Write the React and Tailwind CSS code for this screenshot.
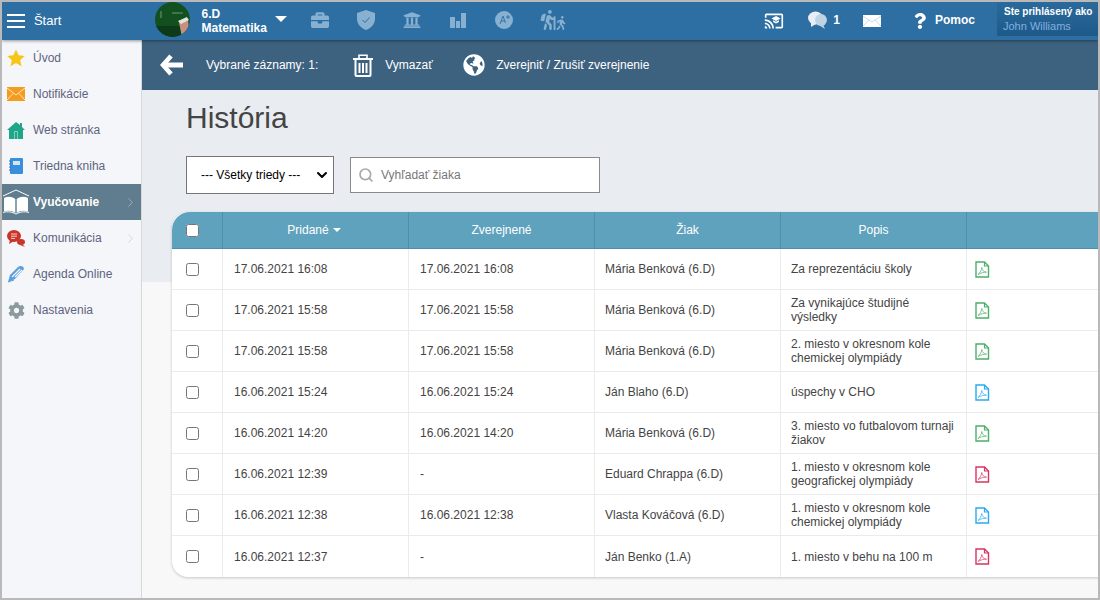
import React from "react";
import { FaGlobeAmericas, FaBriefcase, FaUniversity, FaWalking, FaHiking, FaQuestion, FaCog } from "react-icons/fa";
import { MdCastForEducation } from "react-icons/md";
import { ChevronRight, ChevronDown, Search } from "lucide-react";

const rows = [
  ["17.06.2021 16:08", "17.06.2021 16:08", "Mária Benková (6.D)", ["Za reprezentáciu školy"], "#4caf6a"],
  ["17.06.2021 15:58", "17.06.2021 15:58", "Mária Benková (6.D)", ["Za vynikajúce študijné", "výsledky"], "#4caf6a"],
  ["17.06.2021 15:58", "17.06.2021 15:58", "Mária Benková (6.D)", ["2. miesto v okresnom kole", "chemickej olympiády"], "#4caf6a"],
  ["16.06.2021 15:24", "16.06.2021 15:24", "Ján Blaho (6.D)", ["úspechy v CHO"], "#29aaf0"],
  ["16.06.2021 14:20", "16.06.2021 14:20", "Mária Benková (6.D)", ["3. miesto vo futbalovom turnaji", "žiakov"], "#4caf6a"],
  ["16.06.2021 12:39", "-", "Eduard Chrappa (6.D)", ["1. miesto v okresnom kole", "geografickej olympiády"], "#d9345f"],
  ["16.06.2021 12:38", "16.06.2021 12:38", "Vlasta Kováčová (6.D)", ["1. miesto v okresnom kole", "chemickej olympiády"], "#29aaf0"],
  ["16.06.2021 12:37", "-", "Ján Benko (1.A)", ["1. miesto v behu na 100 m"], "#d9345f"],
];

function Pdf({ color }) {
  return (
    <svg width="15" height="17" viewBox="0 0 15 17" fill="none">
      <path d="M1 1H9.5L13.5 5V16H1Z" fill="#fff" stroke={color} strokeWidth="1.4" />
      <path d="M9.5 1V5H13.5" stroke={color} strokeWidth="1.2" />
      <path d="M3 13.5C5 12 6.5 9 6.8 6.5C7.2 9 8.5 11 11.5 11.2C9 11 6 11.8 3 13.5Z" stroke={color} strokeOpacity="0.7" strokeWidth="1" />
    </svg>
  );
}

const StarIcon = () => (
  <svg width="18" height="18" viewBox="0 0 18 18"><path d="M9 0.5L11.6 6.2L17.8 6.9L13.2 11L14.5 17.2L9 14.1L3.5 17.2L4.8 11L.2 6.9L6.4 6.2Z" fill="#f5c518" /></svg>
);
const MailIcon = () => (
  <svg width="18" height="14" viewBox="0 0 18 14"><rect width="18" height="14" fill="#f39c1f" /><path d="M0 1L9 8L18 1M0 13L6.5 6M18 13L11.5 6" stroke="#fde3b5" strokeWidth="1" fill="none" /></svg>
);
const HouseIcon = () => (
  <svg width="18" height="17" viewBox="0 0 18 17"><path d="M9 0L13 3V1H15V5L18 8L16 8V17H2V8L0 8Z" fill="#1fa58a" /><rect x="7" y="9" width="4" height="8" fill="#7fd0bf" /><rect x="8" y="10" width="2" height="7" fill="#1fa58a" /></svg>
);
const NotebookIcon = () => (
  <svg width="14" height="16" viewBox="0 0 14 16"><rect x="1" width="13" height="16" rx="1" fill="#3a8fdc" /><rect x="4" y="3" width="7" height="4" fill="#cfe6f8" /><path d="M0 3H2M0 6H2M0 9H2M0 12H2" stroke="#2a6eb0" strokeWidth="1" /></svg>
);
const BookIcon = () => (
  <svg width="28" height="26" viewBox="0 0 28 26" fill="none">
    <path d="M1 7L14 1L27 7" stroke="#fff" strokeWidth="1" />
    <path d="M2 9C6 7 10 7.5 13.3 10V24C10 21.5 6 21 2 22.5Z" fill="#fff" />
    <path d="M26 9C22 7 18 7.5 14.7 10V24C18 21.5 22 21 26 22.5Z" fill="#fff" />
    <path d="M1 23.5C6 22 10 23 14 25C18 23 22 22 27 23.5" stroke="#fff" strokeWidth="1" />
  </svg>
);
const TalkIcon = () => (
  <svg width="18" height="17" viewBox="0 0 18 17">
    <ellipse cx="7" cy="6" rx="7" ry="6" fill="#c9352b" />
    <path d="M3 10L2 14L7 11Z" fill="#c9352b" />
    <path d="M4 4H10M4 6.2H10M4 8.4H8" stroke="#f5d5d0" strokeWidth="1" />
    <ellipse cx="14" cy="12" rx="4" ry="3" fill="#c9352b" />
    <path d="M15 14L18 17L13 15Z" fill="#c9352b" />
  </svg>
);
const PenIcon = () => (
  <svg width="18" height="18" viewBox="0 0 18 18" fill="none">
    <path d="M1 17L3 10L11 2C13 0 17 1 17 4L8 14Z" fill="#5b9fdc" />
    <path d="M5 12L13 4M8 12L15 5" stroke="#f5f6f9" strokeWidth="1.2" />
    <path d="M1 17L7 15" stroke="#5b9fdc" strokeWidth="1" />
  </svg>
);

const nav = [
  ["Úvod", <StarIcon />],
  ["Notifikácie", <MailIcon />],
  ["Web stránka", <HouseIcon />],
  ["Triedna kniha", <NotebookIcon />],
  ["Vyučovanie", <BookIcon />, true, true],
  ["Komunikácia", <TalkIcon />, false, true],
  ["Agenda Online", <PenIcon />],
  ["Nastavenia", <FaCog size={17} color="#8b9a9e" />],
];

const ROW = "grid grid-cols-[51px_186px_186px_186px_186px_1fr]";

export default function App() {
  return (
    <div className="w-[1100px] h-[600px] border-2 border-[#b9b9b9] bg-white flex flex-col overflow-hidden font-['Liberation_Sans',Arial,sans-serif] text-[12px] text-[#444]">
      <header className="h-[38px] shrink-0 bg-[#2d6ea3] flex items-center text-white shadow-[0_1px_3px_rgba(0,0,0,0.4)] relative z-20">
        <div className="w-[18px] ml-[5px] flex flex-col gap-[4px]">
          <span className="h-[2px] bg-white" />
          <span className="h-[2px] bg-white" />
          <span className="h-[2px] bg-white" />
        </div>
        <span className="ml-[9px] text-[13px] w-[121px]">Štart</span>
        <svg width="35" height="35" viewBox="0 0 35 35" className="mt-[-3px]">
          <defs><clipPath id="c"><circle cx="17.5" cy="17.5" r="17.5" /></clipPath></defs>
          <g clipPath="url(#c)">
            <rect width="35" height="35" fill="#12501f" />
            <rect y="24" width="35" height="11" fill="#0d3a18" />
            <path d="M6 9V16M17 11H28" stroke="#6e9a78" strokeWidth="1" />
            <path d="M24 20L33 17L35 35H27Z" fill="#c98f80" />
            <path d="M23 19L32 15L34 18L26 22Z" fill="#dfe4d8" />
          </g>
        </svg>
        <div className="ml-[12px] w-[74px] font-bold leading-[14px]">
          <div>6.D</div>
          <div>Matematika</div>
        </div>
        <span className="w-0 h-0 border-x-[6px] border-x-transparent border-t-[6px] border-t-white mb-[4px]" />
        <div className="flex items-center text-[#88b0d0] ml-[24px] mb-[2px]">
          <FaBriefcase size={18} />
          <svg width="18" height="20" viewBox="0 0 18 20" className="ml-[28px]"><path d="M9 0L18 3V9C18 14 14 18 9 20C4 18 0 14 0 9V3Z" fill="currentColor" /><path d="M5.5 10L8 12.5L12.5 7.5" stroke="#2d6ea3" strokeWidth="1" fill="none" /></svg>
          <FaUniversity size={18} className="ml-[28px]" />
          <svg width="16" height="16" viewBox="0 0 16 16" className="ml-[29px]"><path d="M0 5H5V16H0ZM6 9H10V16H6ZM11 1H16V16H11Z" fill="currentColor" /></svg>
          <svg width="18" height="18" viewBox="0 0 18 18" className="ml-[29px]"><circle cx="9" cy="9" r="9" fill="currentColor" /><path d="M5 13L8 5L10.5 12M6 10H10M11 6H15M13 4V8" stroke="#2d6ea3" strokeWidth="0.9" fill="none" /></svg>
          <span className="ml-[25px] flex items-end">
            <FaHiking size={20} />
            <FaWalking size={14} className="ml-[-4px]" />
          </span>
        </div>
        <MdCastForEducation size={20} className="ml-[196px]" />
        <svg width="19" height="18" viewBox="0 0 19 18" className="ml-[24px] mb-[2px]">
          <ellipse cx="7.5" cy="7" rx="7.5" ry="6.5" fill="#e8eef3" />
          <path d="M3 11L3 16L8 13Z" fill="#e8eef3" />
          <ellipse cx="13" cy="9" rx="6" ry="6" fill="#bfd3e2" />
          <path d="M15 13L17 18L11 14Z" fill="#bfd3e2" />
        </svg>
        <span className="ml-[6px] w-[30px] font-bold text-[12px] mb-[3px]">1</span>
        <svg width="18" height="12" viewBox="0 0 18 12" className="mb-[1px]"><rect width="18" height="12" fill="#fff" /><path d="M0 1L9 7L18 1M0 11L6 5M18 11L12 5" stroke="#b5c9da" strokeWidth="0.7" fill="none" /></svg>
        <FaQuestion size={16} className="ml-[31px]" />
        <span className="ml-[7px] font-bold mb-[2px]">Pomoc</span>
        <div className="ml-[22px] mt-[-4px] w-[101px] h-[34px] rounded-bl-[2px] bg-gradient-to-b from-[#2a6a9c] to-[#1d5a88] pl-[7px] pt-[3px] leading-[14px] shrink-0">
          <div className="font-bold text-[10px]">Ste prihlásený ako</div>
          <div className="text-[11px] text-[#85aee0] ml-[-1px]">John Williams</div>
        </div>
      </header>
      <div className="flex flex-1 min-h-0">
        <aside className="w-[140px] shrink-0 bg-[#f5f6f9] border-r border-[#d8d8d8]">
          {nav.map(([label, icon, active, arrow]) => (
            <div key={label} className={`h-[36px] flex items-center relative ${active ? "bg-[#5f7d8e] text-white font-bold" : "text-[#5d6480]"}`}>
              <span className="w-[28px] mr-[3px] shrink-0 flex justify-center">{icon}</span>
              <span>{label}</span>
              {arrow && <ChevronRight size={15} strokeWidth={1.5} className={`absolute right-[3px] top-[11px] ${active ? "text-[#9fb1bc]" : "text-[#cfd3da]"}`} />}
            </div>
          ))}
        </aside>
        <main className="flex-1 min-w-0 overflow-hidden bg-[linear-gradient(to_bottom,#e9ecf0_242px,#f8f8f8_242px)]">
          <div className="h-[50px] bg-[#3d6280] text-white flex items-center">
            <svg width="24" height="24" viewBox="0 0 24 24" fill="none" className="ml-[18px]">
              <path d="M11 3L3 12L11 21" stroke="#fff" strokeWidth="4.6" />
              <path d="M5 12H23" stroke="#fff" strokeWidth="5" />
            </svg>
            <span className="ml-[22px]">Vybrané záznamy: 1:</span>
            <svg width="20" height="23" viewBox="0 0 20 23" fill="none" className="ml-[35px]">
              <path d="M0 5H20" stroke="#fff" strokeWidth="2" />
              <path d="M6 4V1.2H14V4" stroke="#fff" strokeWidth="1.6" />
              <path d="M2.5 6V21C2.5 21.6 3 22 3.5 22H16.5C17 22 17.5 21.6 17.5 21V6" stroke="#fff" strokeWidth="2" />
              <path d="M6.5 9V19M10 9V19M13.5 9V19" stroke="#fff" strokeWidth="2" />
            </svg>
            <span className="ml-[12px] w-[78px]">Vymazať</span>
            <FaGlobeAmericas size={22} />
            <span className="ml-[11px]">Zverejniť / Zrušiť zverejnenie</span>
          </div>
          <div className="pl-[44px] pt-[10px]">
            <h1 className="text-[30px] leading-[36px] text-[#444]">História</h1>
            <div className="flex items-center mt-[20px] gap-[16px]">
              <div className="relative w-[148px] h-[38px]">
                <select defaultValue="a" className="appearance-none w-full h-full bg-white border border-[#767676] pl-[14px] text-[12px] text-black">
                  <option value="a">--- Všetky triedy ---</option>
                </select>
                <ChevronDown size={16} strokeWidth={3} className="absolute right-[4px] top-[11px] text-black pointer-events-none" />
              </div>
              <div className="w-[250px] h-[36px] bg-white border border-[#8a8a8a] flex items-center pl-[7px]">
                <Search size={16} strokeWidth={2.5} className="text-[#a8a8a8]" />
                <span className="ml-[7px] text-[#777]">Vyhľadať žiaka</span>
              </div>
            </div>
          </div>
          <section className="ml-[30px] mt-[18px] w-[960px] bg-white rounded-l-[16px] shadow-[0_1px_3px_rgba(0,0,0,0.2)]">
            <div className={`${ROW} h-[37px] bg-[#5fa2bd] text-white rounded-tl-[18px] border-b border-[#4f8fa9]`}>
              <div className="border-r border-[#4f8fa9] flex items-center pl-[14px]"><input type="checkbox" /></div>
              <div className="border-r border-[#4f8fa9] flex items-center justify-center gap-[4px] pr-[3px]">Pridané<span className="w-0 h-0 border-x-[4px] border-x-transparent border-t-[4px] border-t-white" /></div>
              <div className="border-r border-[#4f8fa9] flex items-center justify-center">Zverejnené</div>
              <div className="border-r border-[#4f8fa9] flex items-center justify-center">Žiak</div>
              <div className="border-r border-[#4f8fa9] flex items-center justify-center">Popis</div>
              <div />
            </div>
            {rows.map((r, i) => (
              <div key={i} className={`${ROW} h-[41px] ${i < rows.length - 1 ? "border-b border-[#ebebeb]" : ""}`}>
                <div className="border-r border-[#ebebeb] flex items-center pl-[14px]"><input type="checkbox" /></div>
                <div className="border-r border-[#ebebeb] flex items-center pl-[11px]">{r[0]}</div>
                <div className="border-r border-[#ebebeb] flex items-center pl-[11px]">{r[1]}</div>
                <div className="border-r border-[#ebebeb] flex items-center pl-[10px]">{r[2]}</div>
                <div className="border-r border-[#ebebeb] flex flex-col justify-center pl-[10px] leading-[14px]">
                  {r[3].map((l) => <div key={l}>{l}</div>)}
                </div>
                <div className="flex items-center pl-[8px]"><Pdf color={r[4]} /></div>
              </div>
            ))}
          </section>
        </main>
      </div>
    </div>
  );
}
